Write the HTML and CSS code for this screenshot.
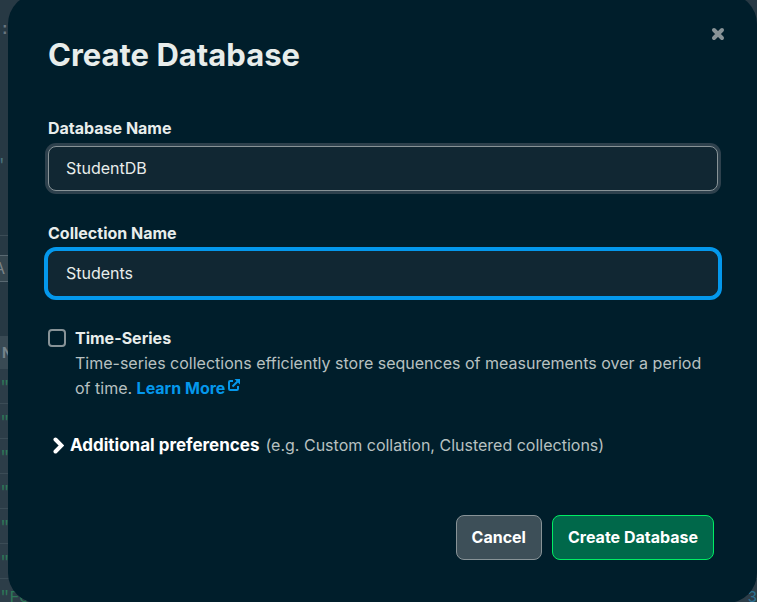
FILE: index.html
```html
<!DOCTYPE html>
<html lang="en">
<head>
<meta charset="utf-8">
<meta name="viewport" content="width=device-width, initial-scale=1">
<title>Create Database</title>
<link rel="stylesheet" href="styles.css">
</head>
<body>
<div class="stage">
  <div class="app" aria-hidden="true">
    <div class="app-menu">:</div>
    <div class="app-query">'</div>
    <div class="app-toolbar"><span class="app-chip">A</span></div>
    <div class="app-head">N</div>
    <div class="app-row">"</div>
    <div class="app-row">"</div>
    <div class="app-row">"</div>
    <div class="app-row">"</div>
    <div class="app-row">"</div>
    <div class="app-row">"</div>
    <div class="app-row"><span>"Fe</span><span class="app-number">3</span></div>
  </div>

  <form class="dialog" role="dialog" aria-labelledby="title">
    <header class="header">
      <h1 class="title" id="title">Create Database</h1>
      <button class="close" type="button" aria-label="Close">
        <svg viewBox="0 0 14 14" width="14" height="14"><path d="M3 3l8 8M11 3l-8 8"/></svg>
      </button>
    </header>

    <div class="field">
      <label class="label" for="db">Database Name</label>
      <input class="input" id="db" type="text" value="StudentDB">
    </div>
    <div class="field">
      <label class="label" for="coll">Collection Name</label>
      <input class="input input-active" id="coll" type="text" value="Students">
    </div>

    <div class="option">
      <input class="check" id="ts" type="checkbox">
      <div>
        <label class="label" for="ts">Time-Series</label>
        <p class="description">Time-series collections efficiently store sequences of measurements over a period of time. <a class="link" href="#">Learn More<svg class="external" viewBox="0 0 12 12" width="12" height="12"><path class="external-box" d="M5 2H2.2Q1 2 1 3.200V9.800Q1 11 2.200 11H8.800Q10 11 10 9.800V7"/><path class="external-arrow" d="M4.500 7.500L9.500 2.500"/><path class="external-head" d="M6.500 0H12V5.500Z"/></svg></a></p>
      </div>
    </div>

    <button class="more" type="button" aria-expanded="false">
      <svg class="chevron" viewBox="0 0 12 18" width="12" height="18"><path d="M3.500 2.500L9.500 8.500L3.500 14.500"/></svg>
      <span class="more-title">Additional preferences</span>
      <span class="more-hint">(e.g. Custom collation, Clustered collections)</span>
    </button>

    <footer class="footer">
      <button class="button" type="button">Cancel</button>
      <button class="button button-primary" type="submit">Create Database</button>
    </footer>
  </form>
</div>
</body>
</html>
```
FILE: styles.css
```css
* {
  box-sizing: border-box;
}

body {
  margin: 0;
  height: 100vh;
  overflow: hidden;
  background: #273944;
  color: #e8edeb;
  font: 16px/25px Inter, "Liberation Sans", sans-serif;
}

button,
input {
  font: inherit;
  color: inherit;
}

.stage {
  display: grid;
}

.app,
.dialog {
  grid-area: 1 / 1;
}

/* Page dimmed behind the dialog */
.app {
  color: #2c7858;
  font: 16px/32px "Liberation Mono", monospace;
}

.app-menu {
  height: 144px;
  padding-top: 14px;
  color: #697780;
  font-weight: bold;
}

.app-query {
  height: 92px;
  padding-top: 6px;
  border-bottom: 1px solid #3b4c56;
  color: #4a7580;
  text-indent: -3px;
}

.app-toolbar {
  height: 100px;
  padding-top: 19px;
}

.app-chip {
  display: block;
  width: 80px;
  height: 27px;
  border: 1px solid #596972;
  border-left: 0;
  background: #35464f;
  color: #7c8488;
  font: 16px/25px Inter, sans-serif;
  text-indent: -6px;
}

.app-head {
  height: 33px;
  padding-left: 2px;
  background: #394a54;
  color: #75838b;
  font: bold 14px/33px Inter, sans-serif;
}

.app-row {
  display: flex;
  justify-content: space-between;
  height: 35px;
  padding-top: 3px;
  border-bottom: 1px solid #3b4c56;
  background: #2c3d48;
}

.app-number {
  color: #2d7192;
}

.dialog {
  align-self: start;
  margin: -6px 0 0 8px;
  padding: 46px 39px 43px 40px;
  border-radius: 30px;
  background: #001e2b;
  z-index: 1;
}

.header {
  display: flex;
  justify-content: space-between;
  margin-bottom: 46px;
}

.title {
  margin: 0;
  font-size: 31px;
  line-height: 30px;
  font-weight: 700;
}

.close {
  width: 24px;
  height: 24px;
  margin: -18px -12px 0 0;
  padding: 5px;
  border: 0;
  background: none;
}

.close svg,
.chevron {
  display: block;
  fill: none;
  stroke-linecap: round;
}

.close svg {
  stroke: #889397;
  stroke-width: 4;
}

.field {
  margin-bottom: 30px;
}

.label {
  display: block;
  font-weight: 700;
}

.input {
  display: block;
  width: 100%;
  height: 45px;
  margin-top: 5px;
  padding: 0 17px 1px;
  border: 1px solid #889397;
  border-radius: 8px;
  outline: 0;
  background: #112733;
  box-shadow: 0 0 0 3px #2e414d;
}

.input-active {
  border-color: #112733;
  box-shadow: 0 0 0 4px #0498ec;
}

.option {
  display: flex;
  align-items: flex-start;
  gap: 9px;
  margin-bottom: 32px;
}

.check {
  flex: none;
  appearance: none;
  width: 18px;
  height: 18px;
  margin: 3px 0 0;
  border: 2px solid #889397;
  border-radius: 4px;
}

.description {
  margin: 0;
  color: #b8c1c1;
}

.link {
  color: #0498ec;
  font-weight: 700;
  text-decoration: none;
}

.external {
  margin-left: 3px;
  vertical-align: 3px;
}

.external path {
  fill: none;
  stroke: #0498ec;
  stroke-width: 2;
}

.external .external-head {
  fill: #0498ec;
  stroke: none;
}

.more {
  display: flex;
  align-items: center;
  gap: 6px;
  margin-bottom: 57px;
  padding: 0 0 0 4px;
  border: 0;
  background: none;
}

.chevron {
  stroke: #fff;
  stroke-width: 4;
}

.more-title {
  color: #fff;
  font-size: 17px;
  font-weight: 700;
}

.more-hint {
  color: #b8c1c1;
}

.footer {
  display: flex;
  justify-content: flex-end;
  gap: 10px;
  padding-right: 4px;
}

.button {
  height: 45px;
  padding: 0 15px;
  border: 1px solid #889397;
  border-radius: 8px;
  background: #3d4f58;
  color: #fff;
  font-weight: 700;
}

.button-primary {
  border-color: #00ed64;
  background: #00684a;
}
```
